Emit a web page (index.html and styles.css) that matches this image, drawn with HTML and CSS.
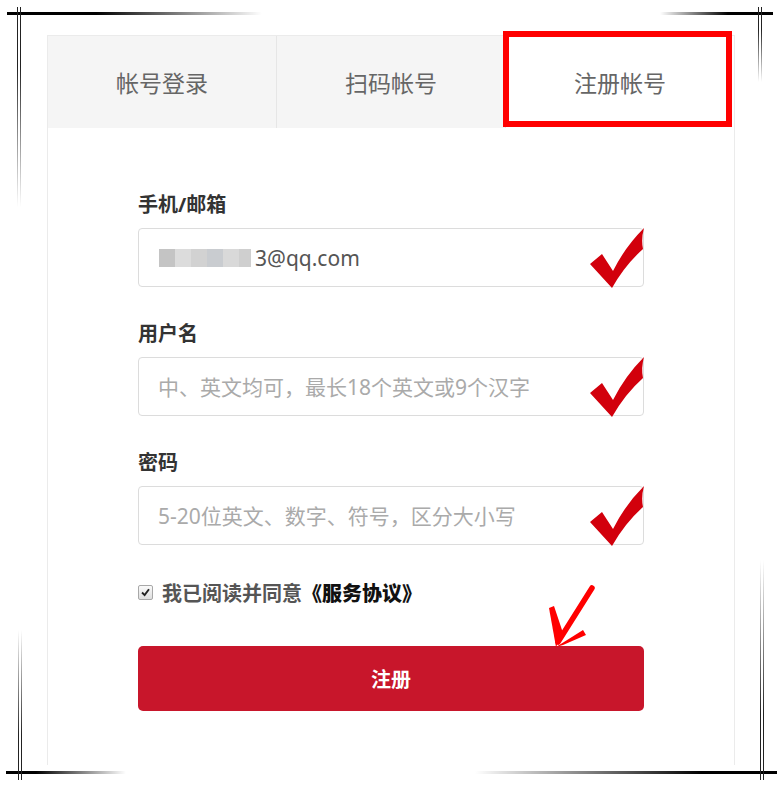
FILE: index.html
```html
<!DOCTYPE html>
<html lang="zh-CN">
<head>
    <meta charset="UTF-8">
    <meta name="viewport" content="width=device-width, initial-scale=1.0">
    <title>注册帐号</title>
    <link rel="stylesheet" href="styles.css">
</head>
<body>
    <div class="frame">
        <span class="line h top-left"></span>
        <span class="line v top-left-v"></span>
        <span class="line h top-right"></span>
        <span class="line v top-right-v"></span>
        <span class="line h bottom-left"></span>
        <span class="line v bottom-left-v"></span>
        <span class="line h bottom-right"></span>
        <span class="line v bottom-right-v"></span>

        <div class="card">
            <div class="tabs">
                <div class="tab">帐号登录</div>
                <div class="tab">扫码帐号</div>
                <div class="tab active">注册帐号</div>
            </div>
            <form class="reg-form" id="regForm">
                <div class="form-group">
                    <label for="account">手机/邮箱</label>
                    <div class="field">
                        <input type="text" id="account" class="text-input email" value="3@qq.com">
                        <span class="mosaic"><i class="m1"></i><i class="m2"></i><i class="m3"></i><i class="m4"></i><i class="m5"></i><i class="m6"></i></span>
                        <svg class="tick" viewBox="0 0 58 62"><path d="M2 37 L14 27 L25 44 Q37 20 56 1 Q53 12 55 22 Q37 38 24 61 Z"/></svg>
                    </div>
                </div>
                <div class="form-group">
                    <label for="username">用户名</label>
                    <div class="field">
                        <input type="text" id="username" class="text-input" placeholder="中、英文均可，最长18个英文或9个汉字">
                        <svg class="tick" viewBox="0 0 58 62"><path d="M2 37 L14 27 L25 44 Q37 20 56 1 Q53 12 55 22 Q37 38 24 61 Z"/></svg>
                    </div>
                </div>
                <div class="form-group">
                    <label for="password">密码</label>
                    <div class="field">
                        <input type="text" id="password" class="text-input" placeholder="5-20位英文、数字、符号，区分大小写">
                        <svg class="tick" viewBox="0 0 58 62"><path d="M2 37 L14 27 L25 44 Q37 20 56 1 Q53 12 55 22 Q37 38 24 61 Z"/></svg>
                    </div>
                </div>
                <div class="agree">
                    <span class="checkbox"><svg viewBox="0 0 15 15"><path d="M3.5 7.5 L6.5 10.5 L11.5 3.8" /></svg></span>
                    <span>我已阅读并同意<b>《服务协议》</b></span>
                </div>
                <div class="btn-wrap">
                    <button type="submit" class="submit-btn">注册</button>
                    <svg class="arrow" viewBox="0 0 48 66">
                        <line x1="44" y1="5" x2="10" y2="59"/>
                        <polygon points="8,64 1,25 6,23 15,50"/>
                        <polygon points="8,64 35,47 38,52 15,62"/>
                    </svg>
                </div>
            </form>
        </div>
    </div>
</body>
</html>
```

FILE: styles.css
```css
body {
    margin: 0;
    padding: 0;
    background: #fff;
    font-family: "Noto Sans", "Noto Sans CJK SC", sans-serif;
    color: #333;
}
.frame {
    position: relative;
    width: 780px;
    height: 787px;
    overflow: hidden;
    padding-top: 35px;
    box-sizing: border-box;
}

/* decorative corner lines */
.line {
    position: absolute;
    display: block;
}
.line.h {
    height: 3px;
}
.line.v {
    width: 5px;
    background: linear-gradient(to right, #222 0 1px, transparent 1px 3px, #222 3px 4px, transparent 4px);
}
.top-left {
    top: 12px;
    left: 7px;
    width: 255px;
    background: linear-gradient(to right, #000 0, #000 35%, rgba(0,0,0,0) 100%);
}
.top-left-v {
    top: 7px;
    left: 17px;
    height: 200px;
    -webkit-mask-image: linear-gradient(to bottom, #000 30%, transparent);
    mask-image: linear-gradient(to bottom, #000 30%, transparent);
}
.top-right {
    top: 12px;
    left: 660px;
    width: 113px;
    background: linear-gradient(to right, rgba(0,0,0,0) 0, #000 60%, #000 100%);
}
.top-right-v {
    top: 7px;
    left: 758px;
    height: 75px;
    -webkit-mask-image: linear-gradient(to bottom, #000 30%, transparent);
    mask-image: linear-gradient(to bottom, #000 30%, transparent);
}
.bottom-left {
    top: 771px;
    left: 6px;
    width: 120px;
    background: linear-gradient(to right, #000 0, #000 25%, rgba(0,0,0,0) 100%);
}
.bottom-left-v {
    top: 630px;
    left: 18px;
    height: 150px;
    -webkit-mask-image: linear-gradient(to top, #000 30%, transparent);
    mask-image: linear-gradient(to top, #000 30%, transparent);
}
.bottom-right {
    top: 771px;
    left: 475px;
    width: 302px;
    background: linear-gradient(to right, rgba(0,0,0,0) 0, #000 75%, #000 100%);
}
.bottom-right-v {
    top: 560px;
    left: 760px;
    height: 220px;
    -webkit-mask-image: linear-gradient(to top, #000 30%, transparent);
    mask-image: linear-gradient(to top, #000 30%, transparent);
}

.card {
    margin-left: 47px;
    width: 688px;
    height: 730px;
    border: 1px solid #ebebeb;
    border-bottom: none;
    box-sizing: border-box;
    background: #fff;
}
.tabs {
    display: flex;
    height: 92px;
}
.tab {
    flex: 1;
    display: flex;
    align-items: center;
    justify-content: center;
    font-size: 23px;
    color: #666;
    background: #f5f5f5;
    border-right: 1px solid #e6e6e6;
}
.tab.active {
    background: #fff;
    border-right: none;
    position: relative;
}
.tab.active::after {
    content: "";
    position: absolute;
    top: -5px;
    left: -3px;
    right: 2px;
    bottom: 1px;
    border: 6px solid #ff0000;
}

.reg-form {
    padding: 65px 90px 0;
}
.form-group {
    margin-bottom: 35px;
}
.form-group label {
    display: block;
    font-size: 20px;
    line-height: 24px;
    font-weight: bold;
    color: #333;
    margin-bottom: 11px;
}
.field {
    position: relative;
}
.text-input {
    display: block;
    width: 100%;
    height: 59px;
    padding: 0 19px;
    border: 1px solid #dcdcdc;
    border-radius: 4px;
    box-sizing: border-box;
    font-family: inherit;
    font-size: 21px;
    color: #555;
    outline: none;
}
.text-input::placeholder {
    color: #aaa;
}
.text-input.email {
    padding-left: 116px;
}
.mosaic {
    position: absolute;
    top: 21px;
    left: 21px;
    display: flex;
    height: 18px;
}
.mosaic i {
    display: block;
    width: 16px;
    height: 18px;
}
.mosaic .m1 { background: #c4c4c4; }
.mosaic .m2 { background: #dcdcdc; }
.mosaic .m3 { background: #d2d2d2; }
.mosaic .m4 { background: #c9ccd0; }
.mosaic .m5 { background: #d9d9d9; }
.mosaic .m6 { background: #cfcfcf; width: 12px; }
.tick {
    position: absolute;
    top: -1px;
    right: -2px;
    width: 58px;
    height: 62px;
    fill: #d2000c;
}

.agree {
    display: flex;
    align-items: center;
    gap: 9px;
    height: 24px;
    font-size: 20px;
    font-weight: bold;
    color: #555;
}
.agree b {
    color: #111;
}
.checkbox {
    width: 15px;
    height: 15px;
    border: 1px solid #a8a8a8;
    border-radius: 2px;
    box-sizing: border-box;
    background: linear-gradient(#fafafa, #dedede);
    display: flex;
}
.checkbox svg {
    width: 13px;
    height: 13px;
    fill: none;
    stroke: #222;
    stroke-width: 2.2;
}
.btn-wrap {
    position: relative;
    margin-top: 42px;
}
.submit-btn {
    display: block;
    width: 100%;
    height: 65px;
    border: none;
    border-radius: 5px;
    background: #c8162b;
    color: #fff;
    font-family: inherit;
    font-size: 20px;
    font-weight: bold;
    cursor: pointer;
}
.arrow {
    position: absolute;
    top: -63px;
    left: 410px;
    width: 48px;
    height: 66px;
}
.arrow line {
    stroke: #f00;
    stroke-width: 5.5;
    stroke-linecap: round;
}
.arrow polygon {
    fill: #f00;
}
```
